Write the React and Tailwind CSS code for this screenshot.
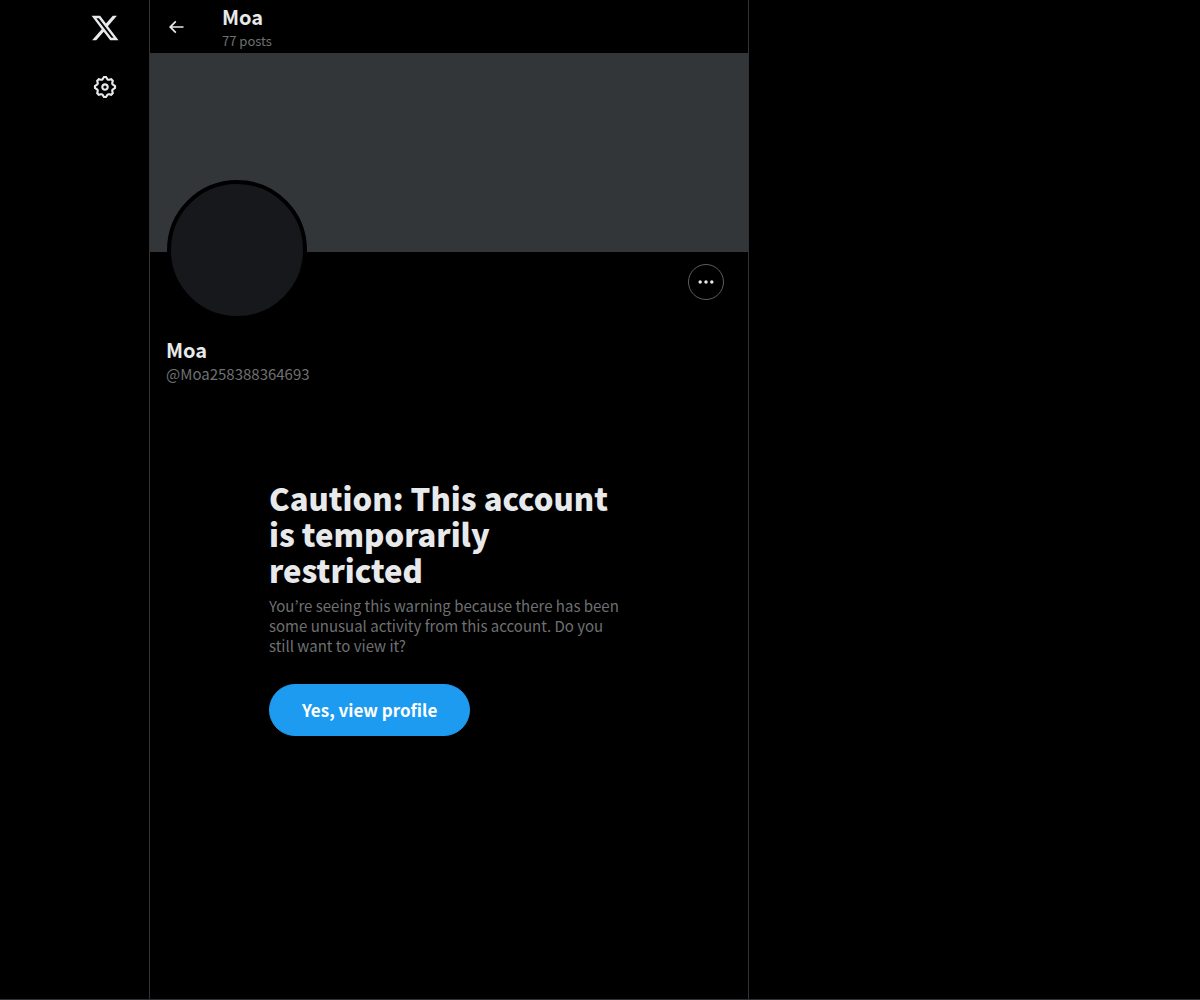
import React from "react";

const XLogo = () => (
  <svg viewBox="0 0 24 24" className="size-[30px] fill-current" aria-hidden="true">
    <path d="M18.244 2.25h3.308l-7.227 8.26 8.502 11.24H16.17l-5.214-6.817L4.99 21.75H1.68l7.73-8.835L1.254 2.25H8.08l4.713 6.231zm-1.161 17.52h1.833L7.084 4.126H5.117z" />
  </svg>
);

const SettingsIcon = () => (
  <svg viewBox="0 0 24 24" className="size-[26px] fill-current" aria-hidden="true">
    <path d="M10.54 1.75h2.92l1.57 2.36c.11.17.32.25.53.21l2.53-.59 2.17 2.17-.58 2.54c-.05.2.04.41.21.53l2.36 1.57v2.92l-2.36 1.57c-.17.12-.26.33-.21.53l.58 2.54-2.17 2.17-2.53-.59c-.21-.04-.42.04-.53.21l-1.57 2.36h-2.92l-1.58-2.36c-.11-.17-.32-.25-.52-.21l-2.54.59-2.17-2.17.58-2.54c.05-.2-.03-.41-.21-.53l-2.35-1.57v-2.92L4.1 8.97c.18-.12.26-.33.21-.53L3.73 5.9 5.9 3.73l2.54.59c.2.04.41-.04.52-.21l1.58-2.36zm1.07 2l-.98 1.47C10.05 6.08 9 6.5 7.99 6.27l-1.46-.34-.6.6.33 1.46c.24 1.01-.18 2.07-1.05 2.64l-1.46.98v.78l1.46.98c.87.57 1.29 1.63 1.05 2.64l-.33 1.46.6.6 1.46-.34c1.01-.23 2.06.19 2.64 1.05l.98 1.47h.78l.97-1.47c.58-.86 1.63-1.28 2.65-1.05l1.45.34.61-.6-.34-1.46c-.23-1.01.18-2.07 1.05-2.64l1.47-.98v-.78l-1.47-.98c-.87-.57-1.28-1.63-1.05-2.64l.34-1.46-.61-.6-1.45.34c-1.02.23-2.07-.19-2.65-1.05l-.97-1.47h-.78zM12 10.5c-.83 0-1.5.67-1.5 1.5s.67 1.5 1.5 1.5c.82 0 1.5-.67 1.5-1.5s-.68-1.5-1.5-1.5zM8.5 12c0-1.93 1.56-3.5 3.5-3.5 1.93 0 3.5 1.57 3.5 3.5s-1.57 3.5-3.5 3.5c-1.94 0-3.5-1.57-3.5-3.5z" />
  </svg>
);

const BackIcon = () => (
  <svg viewBox="0 0 24 24" className="size-5 fill-current" aria-hidden="true">
    <path d="M7.414 13l5.043 5.04-1.414 1.42L3.586 12l7.457-7.46 1.414 1.42L7.414 11H21v2H7.414z" />
  </svg>
);

const MoreIcon = () => (
  <svg viewBox="0 0 24 24" className="size-5 fill-current" aria-hidden="true">
    <path d="M3 12c0-1.1.9-2 2-2s2 .9 2 2-.9 2-2 2-2-.9-2-2zm9 2c1.1 0 2-.9 2-2s-.9-2-2-2-2 .9-2 2 .9 2 2 2zm7 0c1.1 0 2-.9 2-2s-.9-2-2-2-2 .9-2 2 .9 2 2 2z" />
  </svg>
);

const Sidebar = () => (
  <nav className="flex w-[149px] shrink-0 flex-col items-end gap-[7px] pr-[18px] pt-[2px]">
    <a href="#home" aria-label="X" className="flex size-[52px] items-center justify-center">
      <XLogo />
    </a>
    <a href="#settings" aria-label="Settings" className="flex size-[52px] items-center justify-center">
      <SettingsIcon />
    </a>
  </nav>
);

const TopBar = ({ user }) => (
  <header className="flex h-[53px] items-center px-4">
    <div className="w-14 shrink-0">
      <button type="button" aria-label="Back" className="-ml-2 flex size-9 items-center justify-center rounded-full">
        <BackIcon />
      </button>
    </div>
    <div>
      <h2 className="text-xl leading-7 font-bold">{user.name}</h2>
      <p className="text-[13px] leading-5 text-[#6e7072]">{user.posts} posts</p>
    </div>
  </header>
);

const ProfileHeader = ({ user }) => (
  <section>
    <div className="h-[199px] bg-[#333639]" />
    <div className="px-4 pt-3">
      <div className="flex items-start justify-between">
        <div className="-mt-[84px] ml-px size-[140px] rounded-full border-4 border-black bg-[#16181c]" />
        <button
          type="button"
          aria-label="More"
          className="mr-2 flex size-9 items-center justify-center rounded-full border border-[#5c5f61]"
        >
          <MoreIcon />
        </button>
      </div>
      <h1 className="mt-4 text-xl leading-7 font-bold">{user.name}</h1>
      <p className="text-[15px] leading-5 text-[#6e7072]">@{user.handle}</p>
    </div>
  </section>
);

const Warning = () => (
  <section className="mx-auto mt-24 w-full max-w-[360px]">
    <h2 className="text-[31px] leading-9 font-extrabold">
      Caution: This account is temporarily restricted
    </h2>
    <p className="mt-2 text-[15px] leading-5 text-[#6e7072]">
      You’re seeing this warning because there has been some unusual activity from this account. Do you still want to
      view it?
    </p>
    <button
      type="button"
      className="mt-7 h-[52px] rounded-full border border-[#1d9bf0] bg-[#1d9bf0] px-8 text-[17px] font-bold text-white"
    >
      Yes, view profile
    </button>
  </section>
);

const App = () => {
  const user = { name: "Moa", handle: "Moa258388364693", posts: 77 };

  return (
    <div className="flex min-h-screen border-b border-[#2f3336] bg-black font-['Noto_Sans_CJK_JP',sans-serif] text-[#e7e9ea]">
      <Sidebar />
      <main className="w-full max-w-[600px] border-x border-[#2f3336]">
        <TopBar user={user} />
        <ProfileHeader user={user} />
        <Warning />
      </main>
    </div>
  );
};

export default App;
